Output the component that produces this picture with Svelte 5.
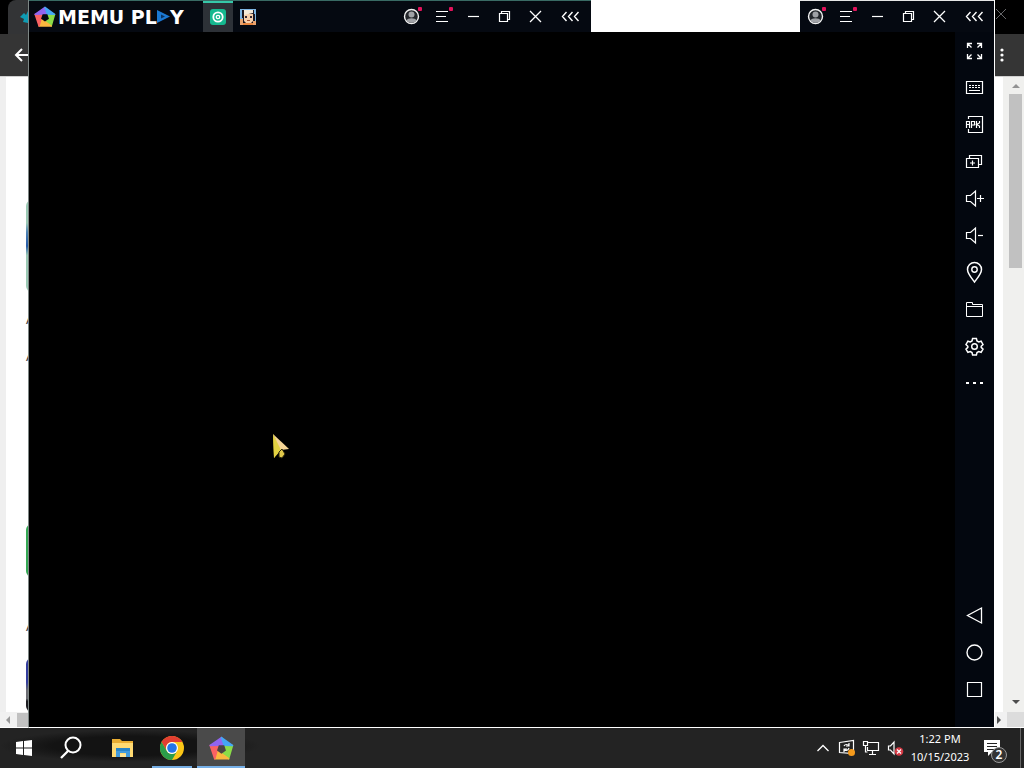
<script>
  const tools = [
    'Full screen', 'Keyboard mapping', 'Install APK', 'New instance', 'Volume up',
    'Volume down', 'Location', 'Shared folder', 'Settings', 'More'
  ];
  const navigation = ['Back', 'Home', 'Recent apps'];
  const windowActions = ['Account', 'Menu', 'Minimize', 'Restore', 'Close', 'Collapse sidebar'];
</script>

{#snippet glyph(name)}
  <svg class="glyph" viewBox="0 0 21 21" aria-hidden="true">
    {#if name === 'Account'}
      <circle cx="10.5" cy="10.5" r="7" fill="#24272c" stroke="#f2f2f2" stroke-width="1.4" />
      <circle cx="10.5" cy="8.5" r="3" fill="#a0a2a6" stroke="none" />
      <path d="M5.5 14.5c1-3 9-3 10 0-2 3-8 3-10 0z" fill="#a0a2a6" stroke="none" />
      <rect x="17" y="1" width="4" height="4" rx="1" fill="#e3125b" stroke="none" />
    {:else if name === 'Menu'}
      <path d="M4 5.500h12M4 10.500h10M4 15.500h12" stroke-width="1.200" />
      <rect x="17" y="1" width="4" height="4" rx="1" fill="#e3125b" stroke="none" />
    {:else if name === 'Minimize'}
      <path d="M5 10.500h11" stroke-width="1.200" />
    {:else if name === 'Restore'}
      <path d="M5.500 7.500h8v8h-8zM7.500 7.500v-2h8v8h-2" stroke-width="1.200" />
    {:else if name === 'Close'}
      <path d="M5 5l11 11M16 5L5 16" stroke-width="1.300" />
    {:else if name === 'Collapse sidebar'}
      <path d="M6.500 6L2.500 10.500l4 4.500M12.500 6l-4 4.500 4 4.500M18.500 6l-4 4.500 4 4.500" stroke-width="1.400" />
    {:else if name === 'Full screen'}
      <path d="M3.500 8v-4.500h4.500M3.500 3.500l4 4M13 3.500h4.500v4.500M17.500 3.500l-4 4M3.500 14v4.500h4.500M3.500 18.500l4-4M13 18.500h4.500v-4.500M17.500 18.500l-4-4" stroke-width="1.300" />
    {:else if name === 'Keyboard mapping'}
      <path d="M2.500 4.500h16v12h-16z" stroke-width="1.200" />
      <path d="M5 8.500h12M5 10.500h12" stroke-dasharray="2 1" />
      <path d="M5 13.500h11" />
    {:else if name === 'Install APK'}
      <path d="M4.500 5V2.500h14v16h-14V15" stroke-width="1.200" />
      <path d="M2.500 14V7.500h3V14M2.500 10.500h3M7.500 14V7.500h3v3.500h-3M12.500 7v7M15.500 7v2l-3 1.500 3 1.500v2" stroke-width="1.200" />
    {:else if name === 'New instance'}
      <path d="M2.500 7.500h12v9h-12zM5.500 7.500v-3h12v9h-3M6 12h5M8.500 9.500v5" stroke-width="1.200" />
    {:else if name === 'Volume up' || name === 'Volume down'}
      <path d="M2.500 7.500h4l5-4.500v15l-5-4.500h-4z" stroke-width="1.200" />
      {#if name === 'Volume up'}
        <path d="M13 10.500h7M16.500 7v7" stroke-width="1.200" />
      {:else}
        <path d="M14 10.500h5" stroke-width="1.200" />
      {/if}
    {:else if name === 'Location'}
      <path d="M10.500 20C7 15.500 3.500 11.500 3.500 7.500a7 7 0 0 1 14 0c0 4-3.500 8-7 12.500z" stroke-width="1.500" />
      <circle cx="10.500" cy="7.500" r="2.700" stroke-width="1.400" />
    {:else if name === 'Shared folder'}
      <path d="M2.500 17.500v-14h6v2h10v12zM2.500 7.500h16" />
    {:else if name === 'Settings'}
      <path d="M8.600 2.500h3.800l.6 2.500 1.700 1 2.400-.8 1.900 3.300-1.800 1.700v1.200l1.800 1.700-1.900 3.200-2.400-.7-1.700 1-.6 2.400H8.600L8 16.600l-1.700-1-2.400.7L2 13.100l1.800-1.700v-1.200L2 8.500l1.900-3.300 2.400.8L8 5z" stroke-width="1.500" />
      <circle cx="10.500" cy="10.500" r="2.800" stroke-width="1.400" />
    {:else if name === 'More'}
      <path d="M2 10h3M9 10h3M16 10h3" stroke-width="2" />
    {:else if name === 'Back'}
      <path d="M17.500 3L3.500 10.500l14 7.500z" stroke-width="1.300" />
    {:else if name === 'Home'}
      <circle cx="10.500" cy="10.500" r="7.500" stroke-width="1.400" />
    {:else if name === 'Recent apps'}
      <path d="M3.500 3.500h14v14h-14z" stroke-width="1.200" />
    {/if}
  </svg>
{/snippet}

{#snippet controls()}
  <div class="controls">
    {#each windowActions as name}
      <button aria-label={name}>{@render glyph(name)}</button>
    {/each}
  </div>
{/snippet}

{#snippet pentagon(hole)}
  <svg class="pentagon" viewBox="0 0 24 24" aria-hidden="true">
    <g stroke-width="1.500" stroke-linejoin="round">
      <path d="M22.500 9.100L18.800 21.800 12 17l4.300-3.100-1.700-5z" fill="#8bdc48" stroke="#8bdc48" />
      <path d="M18.800 21.800H5.500l2.200-7.900L12 17z" fill="#fbb83f" stroke="#fbb83f" />
      <path d="M5.500 21.800L1.200 9.100l8.200-.2-1.700 5z" fill="#fa6263" stroke="#fa6263" />
      <path d="M1.200 9.100L12 1.500l2.600 7.400H9.400z" fill="#9165f0" stroke="#9165f0" />
      <path d="M12 1.500l10.500 7.600-7.900-.2z" fill="#45a6f5" stroke="#45a6f5" />
    </g>
    <path d="M14.600 8.900l1.700 5L12 17l-4.300-3.100 1.700-5z" fill={hole} />
  </svg>
{/snippet}

<div class="desktop">
  <div class="workspace">
    <section class="browser" aria-label="Browser">
      <div class="tabstrip">
        <div class="tab">
          <svg viewBox="0 0 16 16" width="16" height="16" aria-hidden="true">
            <path d="M0 8l4-4 2 2 2-4v12l-5-1 1-3z" fill="#0e9bb3" />
          </svg>
        </div>
        <button class="browser-close" aria-label="Close browser">
          <svg viewBox="0 0 12 12" width="12" height="12"><path d="M1 1l10 10M11 1L1 11" stroke="#66676a" /></svg>
        </button>
      </div>
      <div class="toolbar">
        <button aria-label="Go back">
          <svg viewBox="0 0 16 16" width="16" height="16"><path d="M15 8H2M8 2L2 8l6 6" fill="none" stroke="#fff" stroke-width="2" /></svg>
        </button>
        <button aria-label="Browser menu">
          <svg viewBox="0 0 4 16" width="4" height="16" fill="#fff"><circle cx="2" cy="3" r="1.600" /><circle cx="2" cy="8" r="1.600" /><circle cx="2" cy="13" r="1.600" /></svg>
        </button>
      </div>
      <div class="view">
        <div class="page">
          <div class="thumb art"></div>
          <p>A</p>
          <p>A</p>
          <div class="thumb green"></div>
          <p>A</p>
          <div class="thumb photo"></div>
        </div>
        <div class="scroll-y">
          <svg viewBox="0 0 8 4" width="8" height="4"><path d="M0 4l4-4 4 4z" fill="#929292" /></svg>
          <div class="bar"></div>
          <svg viewBox="0 0 8 4" width="8" height="4"><path d="M0 0l4 4 4-4z" fill="#4d4d4d" /></svg>
        </div>
      </div>
      <div class="scroll-x">
        <svg viewBox="0 0 4 8" width="4" height="8"><path d="M4 0L0 4l4 4z" fill="#999" /></svg>
        <div class="bar"></div>
        <svg viewBox="0 0 4 8" width="4" height="8"><path d="M0 0l4 4-4 4z" fill="#4d4d4d" /></svg>
        <div class="corner"></div>
      </div>
    </section>

    <section class="emulator" aria-label="MEmu Play">
      <header>
        <div class="title">
          <div class="brand">
            {@render pentagon('#050911')}
            <span class="name">MEMU PL<svg viewBox="0 0 13 13" width="13" height="13" aria-hidden="true"><path d="M0 0l13 6.500L0 13z" fill="#1b78d2" /><path d="M4 4.500l4 2L4 8.500z" fill="#0b315f" /></svg>Y</span>
          </div>
          <button class="app active" aria-label="Home tab">
            <svg viewBox="0 0 16 16" width="16" height="16">
              <rect width="16" height="16" rx="3" fill="#16b88f" />
              <circle cx="8" cy="8" r="4.700" fill="none" stroke="#fff" stroke-width="1.800" />
              <circle cx="8" cy="8" r="1.700" fill="none" stroke="#fff" stroke-width="1.300" />
            </svg>
          </button>
          <button class="app" aria-label="Game tab">
            <svg viewBox="0 0 16 16" width="16" height="16">
              <rect width="16" height="16" fill="#7eb6e4" />
              <path d="M2 1h12v4h1v8h-2v2H3V9H2z" fill="#1b1720" />
              <path d="M4 5h9v7l-2 2H6l-2-2z" fill="#f7cfaa" />
              <path d="M4 1h9v3L4 6z" fill="#f5ead8" />
              <path d="M5 7h2v2H5zM10 7h2v2h-2z" fill="#332832" />
              <path d="M7 11h3v1H7z" fill="#a4502d" />
              <path d="M0 10h3v6H0zM13 12h3v4h-3z" fill="#e9a36e" />
              <path d="M3 14h10v2H3z" fill="#e9863e" />
            </svg>
          </button>
          {@render controls()}
        </div>
        <div class="blank"></div>
        <div class="overlap">{@render controls()}</div>
      </header>
      <div class="body">
        <main aria-label="Emulator display"></main>
        <aside>
          {#each tools as name}
            <button aria-label={name}>{@render glyph(name)}</button>
          {/each}
          <div class="spacer"></div>
          {#each navigation as name}
            <button aria-label={name}>{@render glyph(name)}</button>
          {/each}
        </aside>
      </div>
    </section>

    <svg class="cursor" viewBox="0 0 18 26" aria-hidden="true">
      <path d="M1 0l3 12 3 5-5 7z" fill="#d9c327" />
      <path d="M1 0l9 15-8 9z" fill="#e3d242" />
      <path d="M1 0l16 15-8 1z" fill="#f6d697" />
      <path d="M7 18l3-3 3 5-3 4-3-1z" fill="#dfc74a" stroke="#30290d" />
    </svg>
  </div>

  <footer>
    <button class="task" aria-label="Start">
      <svg viewBox="0 0 16 16" width="16" height="16" fill="#fff"><path d="M0 2l7-1v6.500H0zM8 1l8-1v7.500H8zM0 8.500h7V15l-7-1zM8 8.500h8V16l-8-1z" /></svg>
    </button>
    <button class="task wide" aria-label="Search">
      <svg viewBox="0 0 26 24" width="26" height="24"><circle cx="13" cy="9" r="7.500" fill="none" stroke="#fff" stroke-width="2" /><path d="M8 15l-7 7" stroke="#fff" stroke-width="2.300" /></svg>
    </button>
    <button class="task" aria-label="File Explorer">
      <svg viewBox="0 0 22 20" width="22" height="20">
        <path d="M0 1h8l2 2h11v16H0z" fill="#e9ad32" />
        <path d="M0 5h21v14H0z" fill="#ffda72" />
        <path d="M4 10h14v9h-4v-4H8v4H4z" fill="#439bdc" />
        <path d="M4 10h14v3H4z" fill="#2784c8" />
        <path d="M8 16h6v3H8z" fill="#ffe597" />
      </svg>
    </button>
    <button class="task open" aria-label="Google Chrome">
      <svg viewBox="0 0 24 24" width="24" height="24">
        <circle cx="12" cy="12" r="12" fill="#fbc617" />
        <path d="M1.600 6A12 12 0 0 1 22.400 6H12a6 6 0 0 0-5.200 9z" fill="#e23e31" />
        <path d="M1.600 6A12 12 0 0 0 12 24l5.200-9a6 6 0 0 1-10.400 0z" fill="#2b9d49" />
        <circle cx="12" cy="12" r="6" fill="#fff" />
        <circle cx="12" cy="12" r="4.800" fill="#2475e7" />
      </svg>
    </button>
    <button class="task open current" aria-label="MEmu Play">{@render pentagon('#4a4444')}</button>
    <div class="tray">
      <button aria-label="Show hidden icons"><svg viewBox="0 0 16 16" width="16" height="16"><path d="M2.500 11L8 5.500l5.500 5.500" fill="none" stroke="#fff" stroke-width="1.300" /></svg></button>
      <button aria-label="Updates">
        <svg viewBox="0 0 18 18" width="18" height="18" fill="none" stroke="#fff">
          <path d="M1.500 3.500l14-2v13l-14-1z" stroke-width="1.200" />
          <path d="M6 7c1-2 4-2 5 0M11 4v3H8M11 9c-1 3-4 3-5 1M6 13v-3h3" stroke-width="1.200" />
          <circle cx="13.500" cy="13.500" r="3.500" fill="#f59a1c" stroke="none" />
        </svg>
      </button>
      <button aria-label="Network">
        <svg viewBox="0 0 18 18" width="18" height="18" fill="none" stroke="#fff" stroke-width="1.200">
          <path d="M6 3.500h10.500v8H5.500V8M10.500 12v3M7 15.500h7M3.500 7v6h2M1.500 2.500h4v4h-4z" />
        </svg>
      </button>
      <button aria-label="Volume muted">
        <svg viewBox="0 0 18 18" width="18" height="18">
          <path d="M2.500 7h2L8 3v12l-3.500-4h-2z" fill="none" stroke="#fff" stroke-width="1.200" />
          <circle cx="13" cy="12.500" r="4.300" fill="#d53944" />
          <path d="M11 10.500l4 4M15 10.500l-4 4" stroke="#fff" stroke-width="1.200" />
        </svg>
      </button>
      <button class="clock"><span>1:22 PM</span><span>10/15/2023</span></button>
      <button class="notices" aria-label="Notifications">
        <svg viewBox="0 0 18 18" width="18" height="18"><path d="M1 1h16v12H9l-4 4v-4H1z" fill="#fff" /><path d="M4 4.500h10M4 7.500h10M4 10.500h7" stroke="#232323" /></svg>
        <span class="count">2</span>
      </button>
      <button class="show-desktop" aria-label="Show desktop"></button>
    </div>
  </footer>
</div>

<style>
  :global(body) { margin: 0; background: #000; }
  .desktop { display: flex; flex-direction: column; height: 100vh; overflow: hidden; font-family: "Noto Sans", sans-serif; color: #fff; }
  button { display: flex; align-items: center; justify-content: center; margin: 0; padding: 0; border: 0; background: none; color: inherit; font: inherit; }
  svg { display: block; flex: none; }
  .workspace { position: relative; flex: 1; min-height: 0; }

  .browser { display: flex; flex-direction: column; height: 100%; background: #fff; overflow: hidden; }
  .tabstrip { display: flex; justify-content: space-between; flex: none; height: 34px; padding-left: 8px; background: #000; }
  .tab { display: flex; align-items: center; width: 180px; padding-left: 12px; background: #333436; border-radius: 8px 0 0 0; }
  .browser-close { width: 30px; height: 28px; padding-right: 17px; }
  .toolbar { display: flex; justify-content: space-between; flex: none; height: 42px; padding: 0 20px 0 14px; background: #353535; border-bottom: 1px solid #d0d0d0; }
  .view { display: flex; flex: 1; min-height: 0; }
  .page { flex: 1; min-width: 0; padding: 123px 0 0 20px; border-left: 6px solid #efefef; overflow: hidden; }
  .thumb { width: 92px; border-radius: 6px; }
  .art { height: 92px; margin-bottom: 18px; background: linear-gradient(#9ccab5 0 25%, #4d83b5 35%, #255ba8 50%, #9ccab5 60% 100%); }
  .page p { margin: 0; height: 37px; color: #444; font-size: 14px; line-height: 18px; }
  .green { height: 53px; margin: 140px 0 37px; background: #34a853; }
  .page .green + p { height: 44px; line-height: 24px; }
  .photo { height: 54px; background: linear-gradient(#323c9d 0 45%, #6c6d73 60% 75%, #1c1c20 80%); }
  .scroll-y { display: flex; flex-direction: column; align-items: center; gap: 6px; width: 21px; padding: 7px 0 8px 4px; box-sizing: border-box; background: #f0f0ee; }
  .scroll-y .bar { width: 13px; height: 174px; margin-bottom: auto; background: #c1c1c1; }
  .scroll-x { display: flex; align-items: center; flex: none; height: 15px; padding-left: 6px; background: #f1f1f1; border-bottom: 1px solid #fff; }
  .scroll-x .bar { width: 600px; height: 14px; margin: 0 auto 0 7px; background: #c1c1c1; }
  .corner { width: 17px; height: 15px; margin-left: 6px; background: #dcdcdc; }

  .emulator { position: absolute; inset: 0 29px 0 28px; display: flex; flex-direction: column; border: solid #fff; border-width: 0 1px 1px 0; border-left: 1px solid #7d8684; background: #000; }
  header { display: flex; flex: none; height: 32px; }
  .title, .overlap { display: flex; box-sizing: border-box; background: #050911; border-top: 1px solid #396a64; }
  .title { flex: 1; max-width: 562px; padding-right: 1px; }
  .overlap { border-top-color: #e6e6e6; }
  .blank { flex: 1; max-width: 209px; background: #fff; }
  .brand { display: flex; align-items: center; gap: 2px; flex: none; width: 169px; padding-left: 5px; }
  .pentagon { width: 22px; height: 22px; }
  .name { display: flex; align-items: center; font: bold 19px/24px "DejaVu Sans", sans-serif; white-space: pre; }
  .app { width: 30px; }
  .active { background: #2d3137; box-shadow: inset 0 2px #36c7a8; }
  .controls { display: flex; margin-left: auto; }
  .controls button { width: 31px; }
  .controls button:last-child { width: 39px; }
  .glyph { width: 21px; height: 21px; overflow: visible; fill: none; stroke: #fff; }
  .body { display: flex; flex: 1; min-height: 0; }
  main { flex: 1; background: #000; }
  aside { display: flex; flex-direction: column; width: 39px; padding-bottom: 19px; box-sizing: border-box; background: #03070f; }
  aside button { flex: none; height: 37px; }
  .spacer { flex: 1; }
  .cursor { position: absolute; left: 272px; top: 434px; width: 18px; height: 26px; }

  footer { display: flex; flex: none; gap: 1px; height: 40px; background: radial-gradient(ellipse 130px 16px at 130px 18px, #131313 60%, #232323); }
  .task { width: 48px; box-sizing: border-box; }
  .wide { width: 49px; padding-right: 2px; }
  .open { background: linear-gradient(#76aee4, #76aee4) center bottom / 40px 2px no-repeat; }
  .current { background: #4a4a4a; border-bottom: 2px solid #76b0e8; padding-top: 2px; }
  .current .pentagon { width: 25px; height: 25px; }
  .tray { display: flex; margin-left: auto; }
  .tray button { width: 24px; }
  .tray .clock { flex-direction: column; width: 66px; font-size: 11px; line-height: 18px; }
  .tray .notices { position: relative; width: 47px; padding-right: 10px; box-sizing: border-box; }
  .count { position: absolute; left: 18px; top: 19px; width: 14px; height: 14px; border: 1px solid #9a9a9a; border-radius: 50%; background: #333; font-size: 12px; font-weight: 600; line-height: 14px; text-align: center; }
  .tray .show-desktop { width: 4px; border-left: 1px solid #666; }
</style>
